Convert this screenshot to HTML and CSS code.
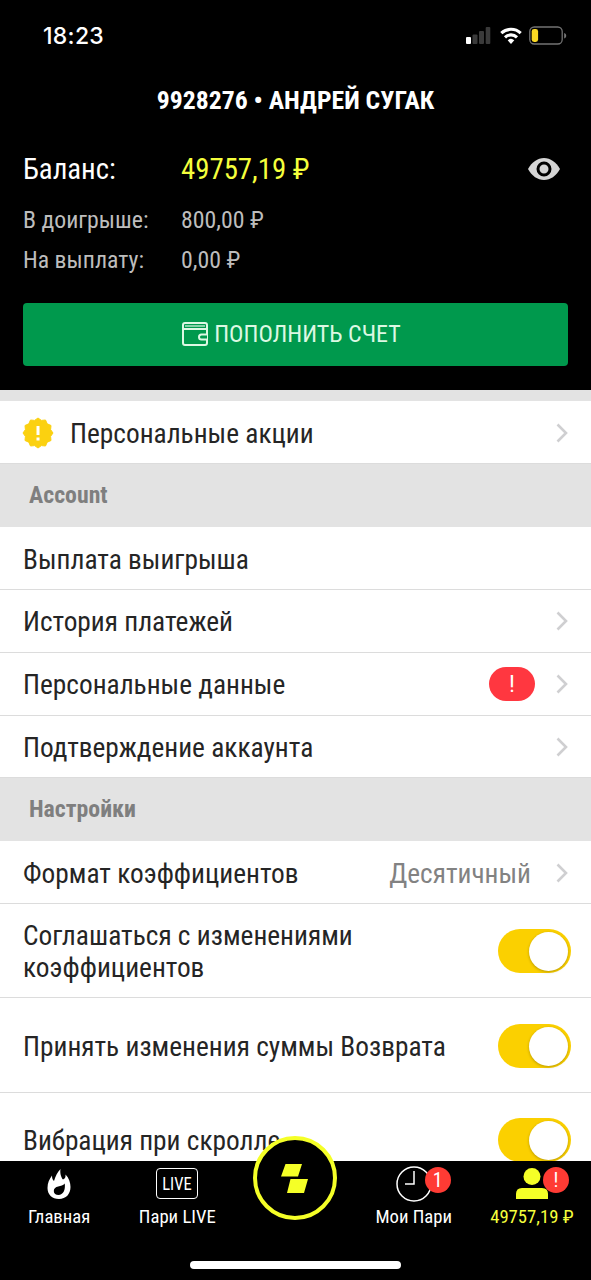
FILE: index.html
```html
<!DOCTYPE html>
<html lang="ru">
<head>
<meta charset="utf-8">
<title>Профиль</title>
<link rel="stylesheet" href="styles.css">
</head>
<body>
<svg class="defs" aria-hidden="true">
  <symbol id="chevron" viewBox="0 0 12 20"><path d="M1.5 1.5 10 10 1.5 18.5" fill="none" stroke="#cfcfd1" stroke-width="2.6"/></symbol>
</svg>
<div class="screen">
  <header class="header">
    <div class="status">
      <span class="time">18:23</span>
      <div class="indicators">
        <svg width="25" height="18" viewBox="0 0 25 18"><rect x="0" y="10" width="5" height="7" rx="1" fill="#fff"/><g fill="#3a3a3a"><rect x="6.5" y="7.5" width="5" height="9.5" rx="1"/><rect x="13" y="4" width="5" height="13" rx="1"/><rect x="19.7" y="0" width="4.6" height="17" rx="1"/></g></svg>
        <svg class="wifi" width="22" height="18" viewBox="0 0 22 18"><g fill="none" stroke="#fff" stroke-width="3.1"><path d="M1.3 6.2a14 14 0 0 1 19.4 0"/><path d="M5 10.3a8.7 8.7 0 0 1 12 0"/></g><path d="M7.7 13.3a4.9 4.9 0 0 1 6.6 0L11 17z" fill="#fff"/></svg>
        <svg class="battery" width="38" height="20" viewBox="0 0 38 20"><rect x=".8" y="1" width="32.400" height="17" rx="4.5" fill="none" stroke="#737373" stroke-width="1.3"/><rect x="2.7" y="3" width="6.4" height="13" rx="2.4" fill="#fbd923"/><path d="M35.200 7v5.500c1.600-.6 2-1.600 2-2.750s-.4-2.150-2-2.750z" fill="#777"/></svg>
      </div>
    </div>
    <h1 class="title">9928276 • АНДРЕЙ СУГАК</h1>
    <div class="money">
      <div class="money-row main"><span>Баланс:</span><span class="yellow">49757,19 ₽</span>
        <svg class="eye" width="32" height="22" viewBox="0 0 32 22"><path d="M0 11C4 4 9.500 0 16 0s12 4 16 11c-4 7-9.500 11-16 11S4 18 0 11z" fill="#d5d5d5"/><circle cx="16" cy="11" r="6" fill="#d5d5d5" stroke="#000" stroke-width="3"/></svg>
      </div>
      <div class="money-row"><span>В доигрыше:</span><span>800,00 ₽</span></div>
      <div class="money-row"><span>На выплату:</span><span>0,00 ₽</span></div>
    </div>
    <div class="deposit">
      <svg width="26" height="24" viewBox="0 0 26 24"><g fill="none" stroke="#dcf8e3" stroke-width="2"><rect x="1" y="1" width="24" height="22" rx="2"/><path d="M1 7h24"/><path d="M3 4h20" stroke-width="1.200"/><path d="M25 12.500h-5.500a2.500 2.500 0 0 0 0 5H25" fill="#00994d"/></g></svg>
      <span>ПОПОЛНИТЬ СЧЕТ</span>
    </div>
  </header>
  <main class="list">
    <div class="gap"></div>
    <div class="row first"><svg class="promo" width="32" height="32" viewBox="-16 -16 32 32"><path d="M15 0 12.600 3.400 13 7.500 9.200 9.200 7.500 13 3.400 12.600 0 15-3.400 12.600-7.500 13-9.200 9.200-13 7.500-12.600 3.400-15 0-12.600-3.400-13-7.500-9.200-9.200-7.500-13-3.400-12.600 0-15 3.400-12.600 7.500-13 9.200-9.200 13-7.500 12.600-3.400z" fill="#fbd110" stroke="#fbd110" stroke-linejoin="round"/><path d="M0-7V2M0 4.500v3" stroke="#fff" stroke-width="3"/></svg><span class="label">Персональные акции</span><svg class="chev"><use href="#chevron"/></svg></div>
    <h2 class="section">Account</h2>
    <div class="row"><span class="label">Выплата выигрыша</span></div>
    <div class="row"><span class="label">История платежей</span><svg class="chev"><use href="#chevron"/></svg></div>
    <div class="row"><span class="label">Персональные данные</span><span class="alert">!</span><svg class="chev"><use href="#chevron"/></svg></div>
    <div class="row"><span class="label">Подтверждение аккаунта</span><svg class="chev"><use href="#chevron"/></svg></div>
    <h2 class="section">Настройки</h2>
    <div class="row"><span class="label">Формат коэффициентов</span><span class="value">Десятичный</span><svg class="chev"><use href="#chevron"/></svg></div>
    <div class="row tall"><span class="label">Соглашаться с изменениями<br>коэффициентов</span><span class="switch"></span></div>
    <div class="row tall"><span class="label">Принять изменения суммы Возврата</span><span class="switch"></span></div>
    <div class="row tall"><span class="label">Вибрация при скролле</span><span class="switch"></span></div>
  </main>
  <nav class="tabs">
    <div class="tab"><div class="icon"><svg width="24" height="32" viewBox="0 0 24 32"><path fill="#fff" fill-rule="evenodd" d="M13.500 1c-.7 4 .5 8.500 2.500 10.500 2-.5 2.800-2.500 2.500-5C22 10 23.500 14.500 23.500 19c0 7-4.500 12-11.500 12S.5 26.500.5 20c0-5.500 2-9 4.500-12.500 0 2.500.5 4.500 2 5.500 1.500-5 3.500-9 6.500-12zM17.700 15.500c-1.500 2-4 2.500-6.500 3S6.800 20.500 6.800 23s2 4 4.700 4c4.500 0 7.200-5 6.200-11.500z"/></svg></div><span>Главная</span></div>
    <div class="tab"><div class="icon"><span class="live"><span>LIVE</span></span></div><span>Пари LIVE</span></div>
    <div class="tab"><div class="hub"><svg width="84" height="84" viewBox="0 0 84 84"><circle cx="42" cy="42" r="40" fill="#000" stroke="#f5ff27" stroke-width="4"/><path d="M32.500 28H49l-4 12.500H28zM37.500 43H55l-4 14H34z" fill="#f5ff27"/></svg></div></div>
    <div class="tab"><div class="icon"><svg width="36" height="36" viewBox="0 0 36 36"><g fill="none" stroke="#fff" stroke-width="1.500"><circle cx="18" cy="18" r="17"/><path d="M18 5v13H9"/></g></svg><b class="badge">1</b></div><span>Мои Пари</span></div>
    <div class="tab active"><div class="icon"><svg width="32" height="32" viewBox="0 0 32 32"><circle cx="16" cy="8.500" r="8.500" fill="#f5ff27"/><path d="M0 31v-5q0-6 6-6h20q6 0 6 6v5z" fill="#f5ff27"/></svg><b class="badge">!</b></div><span>49757,19 ₽</span></div>
    <div class="home"></div>
  </nav>
</div>
</body>
</html>
```
FILE: styles.css
```css
* { box-sizing: border-box; }
body { margin: 0; background: #000; font-family: "Roboto Condensed", Roboto, sans-serif; font-stretch: 75%; }
svg { display: block; flex: none; }
.defs { position: absolute; width: 0; height: 0; }
.screen { width: 591px; height: 1280px; overflow: hidden; position: relative; display: flex; flex-direction: column; }
.header { height: 390px; background: #000; color: #fff; padding: 0 23px; flex: none; }
.status { height: 72px; display: flex; justify-content: space-between; align-items: center; padding-left: 20px; }
.time { font: 500 23px Inter, sans-serif; letter-spacing: .3px; }
.indicators { display: flex; align-items: center; margin-right: 1px; }
.wifi { margin-left: 9px; }
.battery { margin-left: 7px; }
.title { margin: 0; height: 56px; line-height: 56px; text-align: center; font-size: 25.700px; font-weight: 700; white-space: nowrap; }
.money { padding-top: 14px; }
.money-row { display: flex; align-items: center; height: 40px; font-size: 23.800px; color: #bdbdbd; }
.money-row > span:first-child { width: 158px; }
.money-row.main { height: 54px; font-size: 28.800px; color: #fff; margin-bottom: 4px; }
.money-row .yellow { color: #f5ff3c; }
.eye { margin-left: auto; margin-right: 8px; }
.deposit { height: 63px; margin-top: 23px; padding: 0 8px 1px 0; border-radius: 4px; background: #00994d; display: flex; align-items: center; justify-content: center; gap: 6px; font-size: 24px; color: #dcf8e3; }
.list { background: #fff; color: #252525; flex: none; }
.gap { height: 11.200px; background: #e3e3e3; }
.row { height: 62.800px; border-bottom: 1px solid #dcdcdc; display: flex; align-items: center; padding: 1px 23px 0; font-size: 27.350px; }
.row.first { height: 63.200px; padding-top: 2px; }
.promo { margin-right: 16px; margin-left: -1px; }
.label { margin-right: auto; line-height: 32px; white-space: nowrap; padding-top: 2px; }
.value { color: #828282; line-height: 32px; padding-top: 2px; }
.chev { width: 12px; height: 20px; margin-left: 25px; }
.section { height: 62.800px; margin: 0; background: #e3e3e3; color: #7f7f7f; padding-left: 29px; line-height: 63px; font-size: 23.800px; font-weight: 700; }
.alert { width: 46px; height: 34px; border-radius: 17px; background: #ff3740; color: #fff; text-align: center; line-height: 34px; font-size: 24px; margin-right: -4px; }
.tall { height: 94.400px; padding-right: 20px; }
.switch { width: 73px; height: 44px; border-radius: 22px; background: #fbd000; padding: 3px; }
.switch::after { content: ""; display: block; width: 39px; height: 39px; border-radius: 50%; background: #fff; margin-left: 28px; box-shadow: 0 1px 3px #0004; }
.tabs { position: absolute; left: 0; right: 0; top: 1161px; height: 119px; background: #000; display: grid; grid-template-columns: repeat(5, 1fr); color: #fff; font-size: 18.700px; }
.tab { display: flex; flex-direction: column; align-items: center; white-space: nowrap; }
.icon { height: 45px; display: flex; align-items: center; position: relative; }
.tab.active { color: #f5ff3c; }
.live { width: 42px; height: 31px; border: 1.500px solid #fff; border-radius: 4px; display: flex; justify-content: center; line-height: 29px; font-size: 19px; }
.live > span { transform: scaleX(.87); }
.badge { position: absolute; top: 6px; left: 29px; width: 26px; height: 26px; border-radius: 50%; background: #ff3b34; color: #fff; text-align: center; line-height: 26px; font-size: 20px; font-weight: 400; }
.active .badge { left: 27px; }
.hub { margin-top: -25px; }
.home { position: absolute; left: 190px; top: 100px; width: 211px; height: 8px; border-radius: 4px; background: #fff; }
```
